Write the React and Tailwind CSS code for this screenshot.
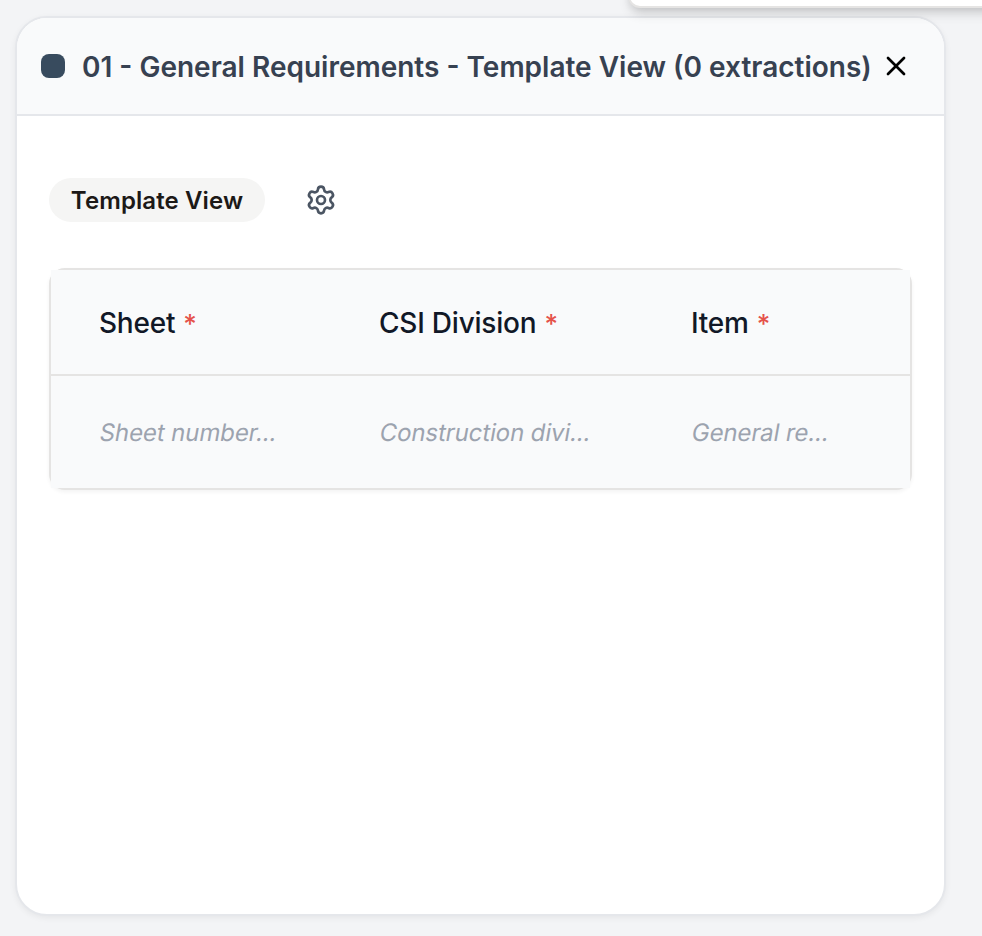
import React from "react";
import { X, Settings } from "lucide-react";

function Column({ title, hint, className }) {
  return (
    <div className={`flex shrink-0 flex-col bg-[#f9fafb] ${className}`}>
      <div className="flex h-[106px] items-center border-b-2 border-[#e5e4e3] pl-12 pt-0.5 text-[28px] font-medium tracking-[-0.22px] text-[#111827]">
        {title}
        <span className="ml-2 text-[26px] text-[#e5524a]">*</span>
      </div>
      <div className="flex h-[112px] items-center pl-[49px] pt-0.5 text-[24px] text-[#9ca3af]">
        <span className="-skew-x-[10deg] tracking-[-0.12px]">{hint}</span>
      </div>
    </div>
  );
}

export default function App() {
  return (
    <div className="relative h-[936px] w-[982px] overflow-hidden bg-[#f3f4f6] pl-[15px] pt-4 font-['Inter',sans-serif]">
      <section className="flex h-[900px] w-[931px] flex-col overflow-hidden rounded-[32px] border-2 border-[#e5e7eb] bg-white shadow-[0_2px_6px_rgba(0,0,0,0.06)]">
        <header className="flex h-[98px] shrink-0 items-center border-b-2 border-[#e5e7eb] bg-[#f9fafb] pl-6">
          <span className="h-6 w-6 shrink-0 rounded-lg bg-[#384b5e]" />
          <h1 className="ml-[17px] w-[798px] shrink-0 whitespace-nowrap pt-px text-[28px] font-semibold text-[#374151]">
            01 - General Requirements - Template View (0 extractions)
          </h1>
          <X className="h-8 w-8 shrink-0 text-black" strokeWidth={2} />
        </header>
        <main className="px-8 pt-[62px]">
          <div className="flex h-11 items-center">
            <span className="flex h-11 w-[216px] items-center justify-center rounded-full bg-[#f5f5f4] pt-0.5 text-[24px] font-semibold tracking-[0.1px] text-[#1c1917]">
              Template View
            </span>
            <Settings className="ml-10 h-8 w-8 text-[#4b5563]" strokeWidth={2} />
          </div>
          <div className="mt-[46px] flex h-[222px] w-[863px] rounded-2xl border-2 border-[#e5e4e3] bg-[#f9fafb] shadow-[0_2px_4px_rgba(0,0,0,0.05)]">
            <Column title="Sheet" hint="Sheet number..." className="w-[280px]" />
            <Column title="CSI Division" hint="Construction divi..." className="w-[312px]" />
            <Column title="Item" hint="General re..." className="w-[267px]" />
          </div>
        </main>
      </section>
      <div className="absolute -top-10 left-[628px] h-12 w-[400px] rounded-xl border-2 border-[#e5e4e3] bg-white shadow-[0_8px_12px_-2px_rgba(0,0,0,0.12),0_4px_8px_-3px_rgba(0,0,0,0.12)]" />
    </div>
  );
}
